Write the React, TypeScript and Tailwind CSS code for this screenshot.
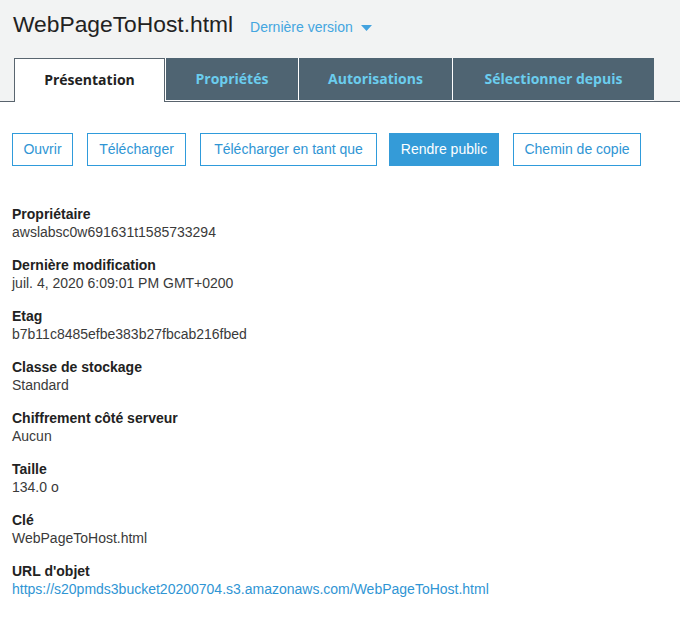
import React from "react";

const fields: { label: string; value: string; link?: boolean }[] = [
  { label: "Propriétaire", value: "awslabsc0w691631t1585733294" },
  { label: "Dernière modification", value: "juil. 4, 2020 6:09:01 PM GMT+0200" },
  { label: "Etag", value: "b7b11c8485efbe383b27fbcab216fbed" },
  { label: "Classe de stockage", value: "Standard" },
  { label: "Chiffrement côté serveur", value: "Aucun" },
  { label: "Taille", value: "134.0 o" },
  { label: "Clé", value: "WebPageToHost.html" },
  {
    label: "URL d'objet",
    value: "https://s20pmds3bucket20200704.s3.amazonaws.com/WebPageToHost.html",
    link: true,
  },
];

const tabs = [
  { label: "Propriétés", w: "w-[133px]" },
  { label: "Autorisations", w: "w-[154px]" },
  { label: "Sélectionner depuis", w: "w-[202px]" },
];

const outline =
  "h-[33px] border border-[#2f9bdb] text-[14px] text-[#2f95d4] bg-white flex items-center justify-center";

export default function App() {
  return (
    <div className="w-[680px] h-[618px] bg-white font-['Liberation_Sans',Arial,sans-serif] text-[#333]">
      <div className="bg-[#f2f3f3] pt-[9px]">
        <div className="flex items-baseline pl-[13px] h-[49px]">
          <span className="text-[22.8px] leading-[30px] text-[#222]">WebPageToHost.html</span>
          <span className="ml-[17px] text-[14px] text-[#44a6e0] flex items-center">
            Dernière version
            <svg width="11" height="6" viewBox="0 0 11 6" className="ml-[8px] mt-[1px]">
              <path d="M0 0 L11 0 L5.5 6 Z" fill="#44a3df" />
            </svg>
          </span>
        </div>
        <div className="flex items-end pl-[14px] border-b border-[#59636d] h-[44px]">
          <div className="w-[151px] h-[44px] -mb-px bg-white border border-b-0 border-[#59656f] flex items-center justify-center font-['Open_Sans',sans-serif] font-bold text-[14px] text-[#222] pb-[2px]">
            Présentation
          </div>
          {tabs.map((t) => (
            <div
              key={t.label}
              className={`${t.w} h-[43px] bg-[#4f6472] border-l border-b border-white first:border-l-0 flex items-center justify-center font-['Open_Sans',sans-serif] font-bold text-[14px] text-[#6bcdee] pb-[2px]`}
            >
              {t.label}
            </div>
          ))}
        </div>
      </div>

      <div className="pl-[12px] pt-[31px] flex">
        <button className={`${outline} w-[61px]`}>Ouvrir</button>
        <button className={`${outline} w-[99px] ml-[14px]`}>Télécharger</button>
        <button className={`${outline} w-[177px] ml-[14px]`}>Télécharger en tant que</button>
        <button className="h-[33px] w-[110px] ml-[12px] bg-[#349bd8] text-[14px] text-white">
          Rendre public
        </button>
        <button className={`${outline} w-[128px] ml-[14px]`}>Chemin de copie</button>
      </div>

      <div className="pl-[12px] pt-[39px] flex flex-col gap-[15px]">
        {fields.map((f) => (
          <div key={f.label} className="flex flex-col">
            <span className="text-[14px] leading-[18px] font-bold text-[#222]">{f.label}</span>
            <span
              className={`text-[14px] leading-[18px] ${f.link ? "text-[#2f95d4]" : "text-[#3a3a3a]"}`}
            >
              {f.value}
            </span>
          </div>
        ))}
      </div>
    </div>
  );
}
